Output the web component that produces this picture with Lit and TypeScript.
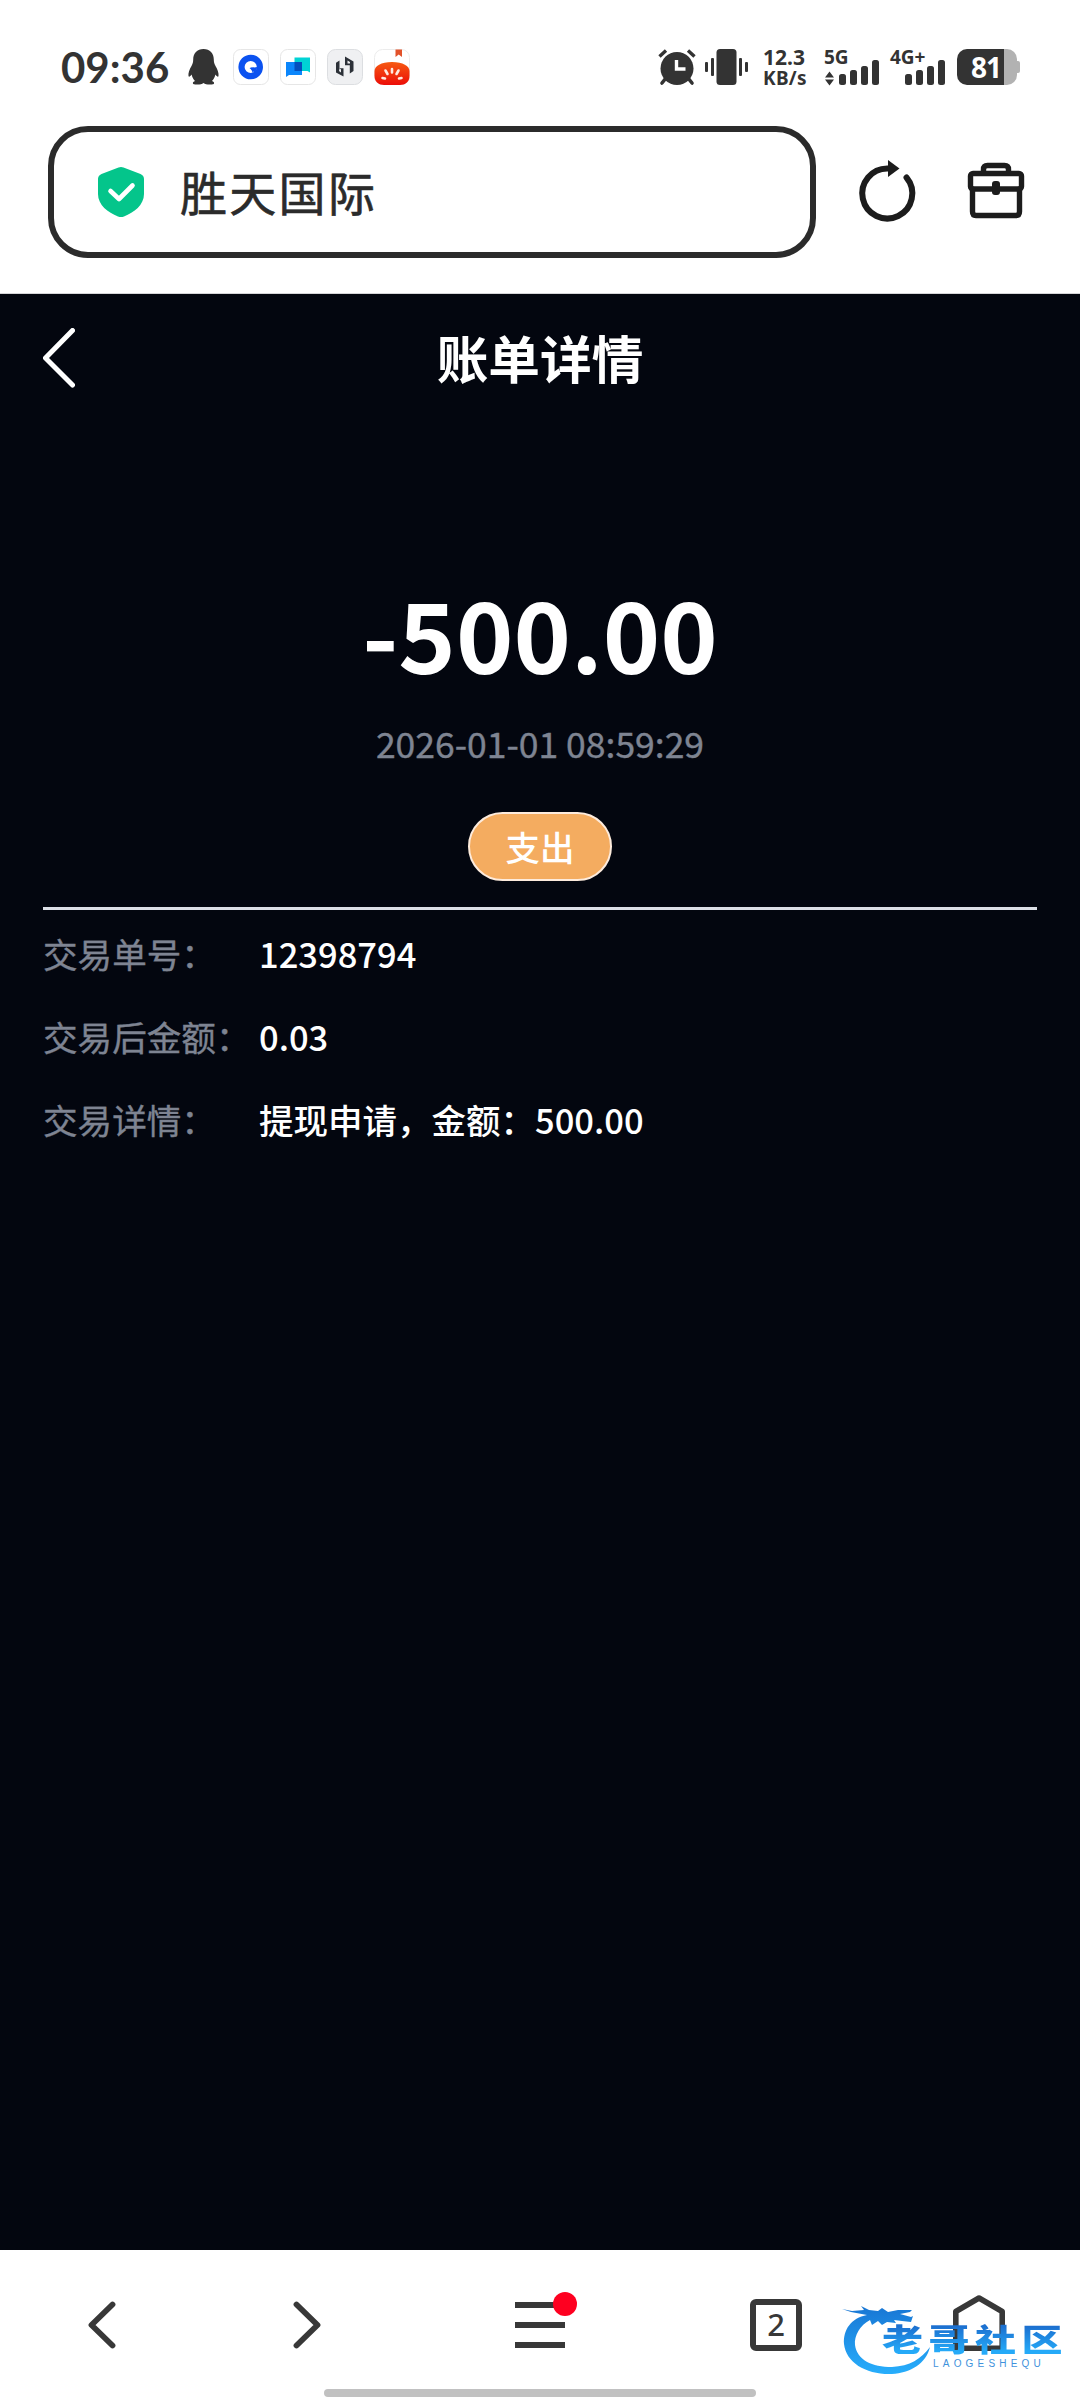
import { css, html, LitElement, svg } from "lit";
import { customElement, property } from "lit/decorators.js";

const signalBars = svg`
  <rect x="0" y="14" width="7" height="11" rx="2.5" />
  <rect x="11" y="10" width="7" height="15" rx="2.5" />
  <rect x="22" y="6" width="7" height="19" rx="2.5" />
  <rect x="33" y="0" width="7" height="25" rx="2.5" />
`;

@customElement("status-bar")
export class StatusBar extends LitElement {
  @property() time = "09:36";
  @property() speed = "12.3";
  @property({ type: Number }) battery = 81;

  render() {
    return html`
      <div class="left">
        <span class="time">${this.time}</span>
        <svg class="penguin" viewBox="0 0 31 36">
          <path
            d="M15.500 0C9 0 5.200 4.500 5.200 10.500C5.200 13 4.800 14.500 3.500 17C1.500 20.500 0 24 .5 27C.8 28.500 2.200 27.500 3.600 25.500C4.200 28.500 5.500 30.500 7 32C5.500 32.500 4.800 33.300 4.900 34.200C5 35.400 7 35.700 9.500 35.600C12 35.500 14 35 15.500 34C17 35 19 35.500 21.500 35.600C24 35.700 26 35.400 26.100 34.200C26.200 33.300 25.500 32.500 24 32C25.500 30.500 26.800 28.500 27.400 25.500C28.800 27.500 30.200 28.500 30.500 27C31 24 29.500 20.500 27.500 17C26.200 14.500 25.800 13 25.800 10.500C25.800 4.500 22 0 15.500 0Z"
          />
        </svg>
        <svg class="app" viewBox="0 0 36 36">
          <rect x=".5" y=".5" width="35" height="35" rx="7" fill="#fff" stroke="#e6e6e6" />
          <circle cx="17.700" cy="18" r="9.200" fill="none" stroke="#0b52f0" stroke-width="6.200" />
          <path d="M16.500 19L22 24L24.500 18Z" fill="#0b52f0" />
          <path d="M17.500 18.500L21 18.500L20 24.500Z" fill="#0b52f0" />
        </svg>
        <svg class="app" viewBox="0 0 36 36">
          <rect x=".5" y=".5" width="35" height="35" rx="7" fill="#fff" stroke="#e6e6e6" />
          <path d="M14.500 8.500H30V23.500L27.500 22H14.500Z" fill="#00d3d5" />
          <path d="M6 13H22V26H9L6 28Z" fill="#0b86fb" />
          <path d="M14.500 13H22V22H14.500Z" fill="#044fbd" />
        </svg>
        <svg class="app" viewBox="0 0 36 36">
          <rect x=".5" y=".5" width="35" height="35" rx="8" fill="#eff0f2" stroke="#dcdee1" />
          <path
            d="M16.500 27.500V19.200H12.500V11.500L9 13.800V23.500ZM18 7.500V16.200H22.800V24.500L26.500 22V12.500Z"
            fill="#2c3138"
          />
          <path d="M12.500 19.200L14 20.500V23.500L12 22ZM20.500 11.500L23 13V14.500H20.500Z" fill="#eff0f2" />
        </svg>
        <svg class="app" viewBox="0 0 36 36">
          <defs>
            <linearGradient id="tomato" x1="0" y1="0" x2="0" y2="1">
              <stop offset="0" stop-color="#f65a12" />
              <stop offset="1" stop-color="#ec0d08" />
            </linearGradient>
          </defs>
          <rect x=".5" y=".5" width="35" height="35" rx="8" fill="#fff" stroke="#ececec" />
          <path d="M21.500 .5H28V8L24.700 5.500L21.500 8Z" fill="#e2522a" />
          <path
            d="M.5 22C.5 17 7 13 18 13S35.500 17 35.500 22V27C35.500 33 31 36 26 36H10C5 36 .5 33 .5 27Z"
            fill="url(#tomato)"
          />
          <path
            d="M18 20V23.500M11.500 21.500L13.500 25M24.500 21.500L22.500 25M8.500 29L11 29.500M27.500 29L25 29.500"
            fill="none"
            stroke="#ffe9df"
            stroke-width="2.600"
            stroke-linecap="round"
          />
        </svg>
      </div>
      <div class="right">
        <svg class="alarm" viewBox="0 0 38 36">
          <circle cx="19" cy="19.500" r="16.500" />
          <path d="M8 29L4 34M30 29L34 34" stroke="#333" stroke-width="3.600" stroke-linecap="round" />
          <path d="M1.500 7.500L8 1.500M36.500 7.500L30 1.500" stroke="#333" stroke-width="3.400" />
          <path d="M18.500 11V20H27.500" fill="none" stroke="#fff" stroke-width="3.400" />
        </svg>
        <svg class="vibrate" viewBox="0 0 43 36">
          <rect x="11.500" y="0" width="20" height="36" rx="3.500" />
          <rect x="0" y="13" width="3" height="10" rx="1" />
          <rect x="6" y="9" width="3" height="18" rx="1" />
          <rect x="34" y="9" width="3" height="18" rx="1" />
          <rect x="40" y="13" width="3" height="10" rx="1" />
        </svg>
        <div class="speed">
          <span>${this.speed}</span>
          <span class="unit">KB/s</span>
        </div>
        <div class="network">
          <span class="kind">5G</span>
          <svg class="bars" viewBox="-14 0 54 25">
            <path d="M-14 17.500L-9.500 11.500L-5 17.500ZM-14 19.500L-9.500 25.500L-5 19.500Z" />
            ${signalBars}
          </svg>
        </div>
        <div class="network second">
          <span class="kind">4G+</span>
          <svg class="bars narrow" viewBox="0 0 40 25">${signalBars}</svg>
        </div>
        <div class="battery">
          <span class="level">${this.battery}</span>
        </div>
      </div>
    `;
  }

  static styles = css`
    :host {
      display: flex;
      justify-content: space-between;
      box-sizing: border-box;
      height: 126px;
      padding: 49px 63px 0 61px;
      color: #333;
      fill: #333;
      font-family: "Noto Sans", sans-serif;
      font-weight: 700;
    }

    svg {
      display: block;
      overflow: visible;
    }

    .left,
    .right {
      display: flex;
      align-items: flex-start;
    }

    .time {
      width: 127px;
      font: 700 42px/36px Lato, sans-serif;
    }

    .penguin {
      width: 31px;
      height: 36px;
      margin-right: 14px;
    }

    .app {
      width: 36px;
      height: 36px;
      margin-right: 11px;
    }

    .alarm {
      width: 38px;
      height: 36px;
      margin-right: 9px;
    }

    .vibrate {
      width: 43px;
      height: 36px;
      margin-right: 15px;
    }

    .speed {
      display: flex;
      flex-direction: column;
      width: 61px;
      font-size: 21px;
      line-height: 16px;
    }

    .unit {
      margin-top: 5px;
      font-size: 19px;
      letter-spacing: 0.3px;
    }

    .network {
      display: flex;
      flex-direction: column;
      width: 66px;
      height: 36px;
    }

    .second {
      width: 67px;
    }

    .kind {
      height: 11px;
      font-size: 19px;
      line-height: 16px;
    }

    .bars {
      width: 54px;
      height: 25px;
      margin-left: 1px;
    }

    .bars.narrow {
      width: 40px;
      margin-left: 15px;
    }

    .battery {
      position: relative;
      width: 60px;
      height: 36px;
      border-radius: 10px;
      background: linear-gradient(90deg, #333 47px, #b2b2b2 47px);
    }

    .battery::after {
      content: "";
      position: absolute;
      right: -3px;
      top: 12px;
      width: 3px;
      height: 12px;
      border-radius: 0 2px 2px 0;
      background: #b2b2b2;
    }

    .level {
      display: block;
      padding-left: 14px;
      color: #fff;
      font-size: 28px;
      line-height: 36px;
      letter-spacing: -1px;
    }
  `;
}

@customElement("address-bar")
export class AddressBar extends LitElement {
  @property() title = "";

  render() {
    return html`
      <div class="box">
        <svg class="shield" viewBox="0 0 46 50">
          <path
            d="M20.500 .6Q23 -.4 25.500 .6L42.500 7Q46 8.500 46 12V27C46 38 36 45.500 26 49.500Q23 50.700 20 49.500C10 45.500 0 38 0 27V12Q0 8.500 3.500 7Z"
            fill="#04c58b"
          />
          <path
            d="M12.500 24L21 32L34.500 18.500"
            fill="none"
            stroke="#fff"
            stroke-width="4.600"
            stroke-linecap="round"
            stroke-linejoin="round"
          />
        </svg>
        <span class="title">${this.title}</span>
      </div>
      <svg class="refresh" viewBox="0 0 56 62">
        <path d="M46.500 17.500A25 25 0 1 1 28 8.500" />
        <path class="solid" d="M28 0L39.500 8.500L28 17Z" />
      </svg>
      <svg class="toolbox" viewBox="0 0 56 55">
        <path d="M15.500 10V6.500Q15.500 2.500 19.500 2.500H36.500Q40.500 2.500 40.500 6.500V10" />
        <rect x="2.500" y="10.500" width="51" height="15.500" rx="2.500" />
        <path d="M4.500 26V48.500Q4.500 52.500 8 52.500H48Q51.500 52.500 51.500 48.500V26" />
        <rect class="solid" x="24" y="18" width="8" height="14" rx="3" />
      </svg>
    `;
  }

  static styles = css`
    :host {
      display: flex;
      align-items: flex-start;
      box-sizing: border-box;
      height: 168px;
      padding: 0 56px 0 48px;
      border-bottom: 1px solid #d5d5d7;
    }

    svg {
      display: block;
      flex: none;
      overflow: visible;
    }

    .box {
      display: flex;
      align-items: center;
      box-sizing: border-box;
      width: 768px;
      height: 132px;
      padding-left: 44px;
      border: 6px solid #2b2b2b;
      border-radius: 40px;
    }

    .shield {
      width: 46px;
      height: 50px;
    }

    .title {
      margin: -2px 0 0 36px;
      color: #2b2b2b;
      font-size: 47px;
      line-height: 60px;
      letter-spacing: 2.300px;
      -webkit-text-stroke: 0.6px #2b2b2b;
    }

    .refresh,
    .toolbox {
      fill: none;
      stroke: #1c1c1c;
      stroke-width: 6;
      stroke-linecap: round;
    }

    .refresh {
      width: 56px;
      height: 62px;
      margin: 34px 0 0 44px;
    }

    .toolbox {
      width: 56px;
      height: 55px;
      margin: 37px 0 0 52px;
      stroke-width: 5.400;
    }

    .solid {
      fill: #1c1c1c;
      stroke: none;
    }
  `;
}

@customElement("bill-detail")
export class BillDetail extends LitElement {
  @property({ type: Array }) rows = [
    { label: "交易单号：", value: "12398794" },
    { label: "交易后金额：", value: "0.03" },
    { label: "交易详情：", value: "提现申请，金额：500.00" },
  ];

  render() {
    return html`
      <header class="header">
        <svg class="back" viewBox="0 0 32 60">
          <path d="M29.500 2.500L2.500 30L29.500 57" />
        </svg>
        <h1 class="title">账单详情</h1>
      </header>
      <section class="summary">
        <p class="amount">-500.00</p>
        <p class="date">2026-01-01 08:59:29</p>
        <span class="badge">支出</span>
      </section>
      <dl class="rows">
        ${this.rows.map(
          (row) => html`
            <div class="row">
              <dt class="label">${row.label}</dt>
              <dd class="value">${row.value}</dd>
            </div>
          `
        )}
      </dl>
    `;
  }

  static styles = css`
    :host {
      display: block;
      flex: 1;
      padding: 0 43px;
      background: #03060f;
      color: #fff;
    }

    h1,
    p,
    dl,
    dd {
      margin: 0;
    }

    .header {
      display: grid;
      grid-template-columns: 32px 1fr 32px;
      align-items: center;
      height: 127px;
    }

    .back {
      width: 32px;
      height: 60px;
      fill: none;
      stroke: #fff;
      stroke-width: 5;
      stroke-linecap: round;
      stroke-linejoin: round;
    }

    .title {
      margin-top: -2px;
      font-size: 51.700px;
      line-height: 60px;
      font-weight: 700;
      text-align: center;
    }

    .summary {
      display: flex;
      flex-direction: column;
      align-items: center;
      height: 486px;
      border-bottom: 3px solid #dcdfe6;
    }

    .amount {
      margin-top: 151px;
      font-size: 97.500px;
      line-height: 120px;
      font-weight: 700;
    }

    .date {
      margin-top: 26px;
      color: #7e8492;
      font-size: 35.500px;
      line-height: 50px;
      -webkit-text-stroke: 0.4px #7e8492;
    }

    .badge {
      box-sizing: border-box;
      width: 144px;
      height: 69px;
      margin-top: 44px;
      border: 2px solid #fdebdc;
      border-radius: 35px;
      background: #f4ac60;
      font-size: 34.500px;
      line-height: 65px;
      font-weight: 500;
      text-align: center;
    }

    .rows {
      display: grid;
      gap: 33px;
      padding-top: 18px;
    }

    .row {
      display: grid;
      grid-template-columns: 216px 1fr;
      height: 50px;
      font-size: 34.500px;
      line-height: 50px;
    }

    .label {
      color: #7e8492;
      font-size: 34.600px;
      white-space: nowrap;
      -webkit-text-stroke: 0.4px #7e8492;
    }

    .value {
      font-weight: 500;
    }
  `;
}

@customElement("site-mark")
export class SiteMark extends LitElement {
  render() {
    return html`
      <svg class="dragon" viewBox="0 0 90 70">
        <defs>
          <linearGradient id="dragon" x1="0" y1="0" x2="0" y2="1">
            <stop offset="0" stop-color="#1876d4" />
            <stop offset="1" stop-color="#27aefc" />
          </linearGradient>
        </defs>
        <path
          fill="url(#dragon)"
          d="M0 4L10 6L22 5L19 1L27 5L36 6L40 3L46 7L56 5L70 5L68 7L58 9L69 12L71 11L69 17L60 16L52 15L54 18L45 17L40 20L36 16L30 20L28 15C18 20 12 31 13 40C15 55 30 62 50 62C68 61 79 54 88 42C84 59 68 68 50 69C25 70 4 58 2 39C1 25 9 13 25 10L9 7Z"
        />
      </svg>
      <div class="words">
        <span class="name">老哥社区</span>
        <span class="latin">LAOGESHEQU</span>
      </div>
    `;
  }

  static styles = css`
    :host {
      display: block;
      width: 222px;
      height: 70px;
    }

    .dragon {
      display: block;
      width: 90px;
      height: 70px;
    }

    .words {
      position: absolute;
      left: 40px;
      top: 10px;
      width: 190px;
    }

    .name {
      display: block;
      height: 60px;
      margin-bottom: -17px;
      font-size: 41px;
      line-height: 60px;
      font-weight: 900;
      letter-spacing: 5.500px;
      white-space: nowrap;
      color: transparent;
      background: linear-gradient(#1c70d0 25%, #25aaf8 80%);
      -webkit-background-clip: text;
      background-clip: text;
      transform: scaleY(0.76);
      transform-origin: 0 0;
    }

    .latin {
      display: block;
      margin-left: 51px;
      color: #3f92dc;
      font: 400 10px/12px "Liberation Sans", sans-serif;
      letter-spacing: 4.200px;
    }
  `;
}

@customElement("bottom-nav")
export class BottomNav extends LitElement {
  @property({ type: Number }) tabs = 2;

  render() {
    return html`
      <nav class="items">
        <svg class="arrow" viewBox="0 0 27 46">
          <path d="M24.500 2.500L3.500 23L24.500 43.500" />
        </svg>
        <svg class="arrow next" viewBox="0 0 27 46">
          <path d="M2.500 2.500L23.500 23L2.500 43.500" />
        </svg>
        <div class="menu">
          <i class="line"></i>
          <i class="line"></i>
          <i class="line"></i>
          <i class="dot"></i>
        </div>
        <div class="tabs">${this.tabs}</div>
        <svg class="home" viewBox="0 0 52 56">
          <path d="M2.800 53.200V16.500L26 3L49.200 16.500V53.200Z" />
        </svg>
      </nav>
      <site-mark class="mark"></site-mark>
      <div class="handle"></div>
    `;
  }

  static styles = css`
    :host {
      display: block;
      position: relative;
      box-sizing: border-box;
      height: 150px;
      background: #fff;
    }

    .items {
      display: flex;
      align-items: flex-start;
      padding: 45px 0 0 88px;
      height: 94px;
    }

    svg {
      display: block;
      overflow: visible;
      fill: none;
      stroke: #383838;
      stroke-linecap: round;
      stroke-linejoin: round;
    }

    .arrow {
      width: 27px;
      height: 46px;
      margin-top: 7px;
      stroke-width: 5.800;
    }

    .next {
      margin-left: 179px;
    }

    .menu {
      position: relative;
      display: grid;
      gap: 14px;
      width: 50px;
      margin: 7px 0 0 194px;
    }

    .line {
      height: 6px;
      background: #383838;
    }

    .dot {
      position: absolute;
      left: 38px;
      top: -10px;
      width: 24px;
      height: 24px;
      border-radius: 50%;
      background: #fe0020;
    }

    .tabs {
      box-sizing: border-box;
      width: 52px;
      height: 52px;
      margin: 4px 0 0 185px;
      border: 6px solid #383838;
      border-radius: 6px;
      color: #383838;
      font: 500 31px/38px "Noto Sans", sans-serif;
      text-align: center;
    }

    .home {
      width: 52px;
      height: 56px;
      margin-left: 151px;
      stroke-width: 5.600;
    }

    .mark {
      position: absolute;
      left: 842px;
      top: 55px;
    }

    .handle {
      width: 432px;
      height: 8px;
      margin: 0 auto;
      border-radius: 4px;
      background: #c1c1c1;
    }
  `;
}

@customElement("app-root")
export class AppRoot extends LitElement {
  render() {
    return html`
      <status-bar></status-bar>
      <address-bar title="胜天国际"></address-bar>
      <bill-detail></bill-detail>
      <bottom-nav></bottom-nav>
    `;
  }

  static styles = css`
    :host {
      display: flex;
      flex-direction: column;
      width: 1080px;
      height: 2400px;
      overflow: hidden;
      background: #fff;
      font-family: "Noto Sans CJK SC", sans-serif;
    }
  `;
}
